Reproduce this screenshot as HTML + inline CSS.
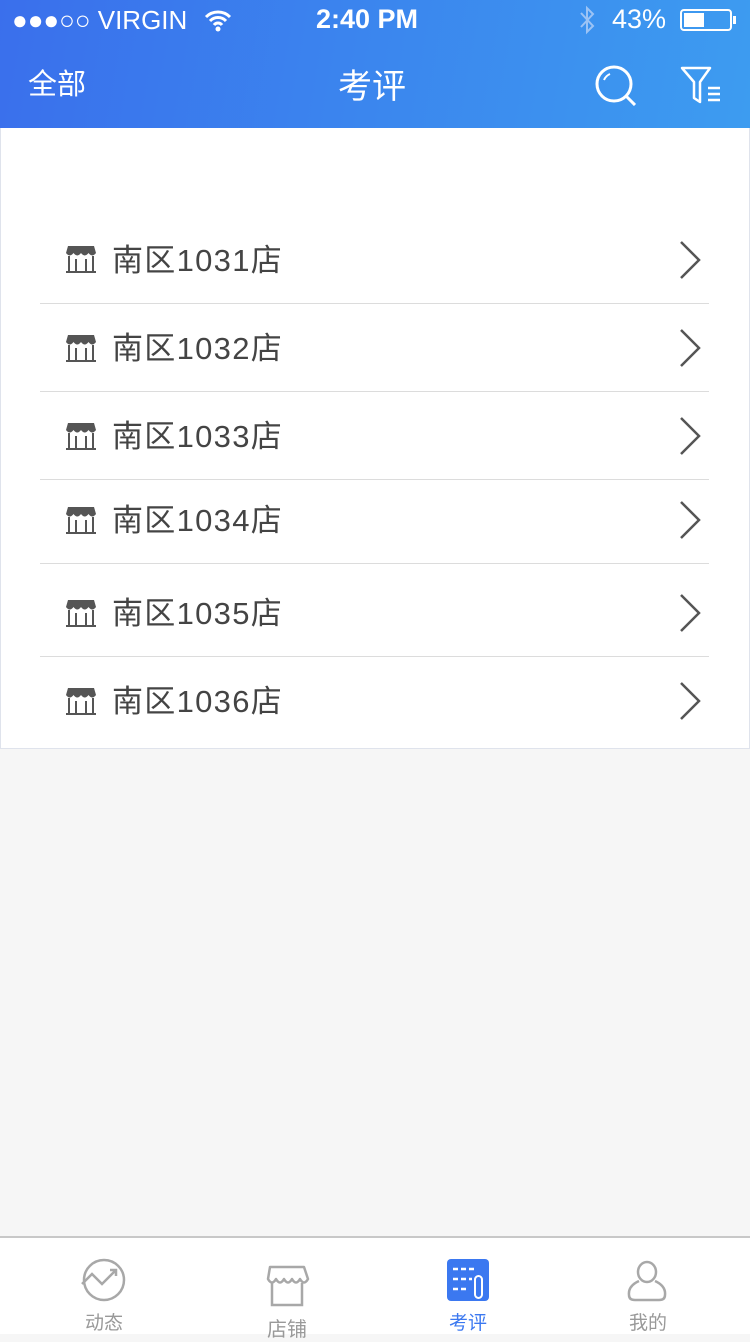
<!DOCTYPE html>
<html><head><meta charset="utf-8"><style>
*{margin:0;padding:0;box-sizing:border-box}
body{width:750px;height:1334px;background:#f6f6f6;font-family:"Liberation Sans","Noto Sans CJK SC",sans-serif;position:relative;overflow:hidden}
.hdr{position:absolute;left:0;top:0;width:750px;height:128px;background:linear-gradient(100deg,#3a6fec 0%,#3b86ee 50%,#3d9cf0 100%);color:#fff}
.sb{position:absolute;top:4px;font-size:28px}
.panel{position:absolute;left:0;top:128px;width:750px;height:621px;background:#fff;border:1px solid #dfe3ec;border-top:none}
.row{position:absolute;left:40px;width:669px;border-bottom:1px solid #dcdcdc}
.row .t{position:absolute;left:72px;font-size:31px;color:#444;letter-spacing:1.3px}
.row svg.s{position:absolute;left:25px}
.row svg.c{position:absolute;left:638px}
.tab{position:absolute;top:1236px;left:0;width:750px;height:98px;background:#fff;border-top:2px solid #c8c8c8}
.tl{position:absolute;font-size:19px;color:#999;text-align:center;width:100px}
</style></head><body>
<div class="hdr">
<div class="sb" style="left:12px;font-size:26px;top:5px">●●●○○ VIRGIN</div>
<svg style="position:absolute;left:203px;top:8px" width="30" height="24" viewBox="0 0 30 24"><path d="M3 9a17 17 0 0 1 24 0M7 13a11 11 0 0 1 16 0M11 17a5 5 0 0 1 8 0" stroke="#fff" stroke-width="3" fill="none"/><circle cx="15" cy="21" r="2.5" fill="#fff"/></svg>
<div class="sb" style="left:316px;font-weight:bold;font-size:27px">2:40 PM</div>
<svg style="position:absolute;left:577px;top:4px" width="20" height="32" viewBox="0 0 20 32"><path d="M4 9l12 13-6 6V4l6 6L4 23" stroke="#9cc3f5" stroke-width="2" fill="none"/></svg>
<div class="sb" style="left:612px;font-size:27px">43%</div>
<div style="position:absolute;left:680px;top:9px;width:52px;height:22px;border:2px solid #fff;border-radius:4px"><div style="margin:2px;width:20px;height:14px;background:#fff"></div></div>
<div style="position:absolute;left:733px;top:16px;width:3px;height:8px;background:#fff"></div>
<div style="position:absolute;left:28px;top:61px;font-size:29px">全部</div>
<div style="position:absolute;left:338px;top:59px;font-size:34px">考评</div>
<svg style="position:absolute;left:592px;top:64px" width="48" height="42" viewBox="0 0 48 42"><circle cx="22" cy="20" r="17" stroke="#fff" stroke-width="3" fill="none"/><path d="M34 32l9 9" stroke="#fff" stroke-width="3"/><path d="M12 16a11 11 0 0 1 6-6" stroke="#fff" stroke-width="2" fill="none"/></svg>
<svg style="position:absolute;left:680px;top:66px" width="44" height="38" viewBox="0 0 44 38"><path d="M2 2h28l-10 14v20l-6-4V16z" stroke="#fff" stroke-width="2.5" fill="none" stroke-linejoin="round"/><path d="M28 22h12M28 28h12M28 34h12" stroke="#fff" stroke-width="2.5"/></svg>
</div>
<div class="panel"></div>
<div class="row" style="top:215px;height:89px"><svg class="s" width="32" height="28" viewBox="0 0 32 28" style="top:30px"><path d="M3 1h26l2 7H1z" fill="#555"/><path d="M1 8q3.75 5 7.5 0q3.75 5 7.5 0q3.75 5 7.5 0q3.75 5 7.5 0" fill="#555"/><path d="M4 11v15M28 11v15M11 14v12M21 14v12M1 27h30" stroke="#555" stroke-width="2"/></svg><div class="t" style="top:20px">南区1031店</div><svg class="c" style="top:25px" width="24" height="40" viewBox="0 0 24 40"><path d="M3 2l18 18L3 38" stroke="#555" stroke-width="2.5" fill="none"/></svg></div>
<div class="row" style="top:304px;height:88px"><svg class="s" width="32" height="28" viewBox="0 0 32 28" style="top:30px"><path d="M3 1h26l2 7H1z" fill="#555"/><path d="M1 8q3.75 5 7.5 0q3.75 5 7.5 0q3.75 5 7.5 0q3.75 5 7.5 0" fill="#555"/><path d="M4 11v15M28 11v15M11 14v12M21 14v12M1 27h30" stroke="#555" stroke-width="2"/></svg><div class="t" style="top:19px">南区1032店</div><svg class="c" style="top:24px" width="24" height="40" viewBox="0 0 24 40"><path d="M3 2l18 18L3 38" stroke="#555" stroke-width="2.5" fill="none"/></svg></div>
<div class="row" style="top:392px;height:88px"><svg class="s" width="32" height="28" viewBox="0 0 32 28" style="top:30px"><path d="M3 1h26l2 7H1z" fill="#555"/><path d="M1 8q3.75 5 7.5 0q3.75 5 7.5 0q3.75 5 7.5 0q3.75 5 7.5 0" fill="#555"/><path d="M4 11v15M28 11v15M11 14v12M21 14v12M1 27h30" stroke="#555" stroke-width="2"/></svg><div class="t" style="top:19px">南区1033店</div><svg class="c" style="top:24px" width="24" height="40" viewBox="0 0 24 40"><path d="M3 2l18 18L3 38" stroke="#555" stroke-width="2.5" fill="none"/></svg></div>
<div class="row" style="top:480px;height:84px"><svg class="s" width="32" height="28" viewBox="0 0 32 28" style="top:26px"><path d="M3 1h26l2 7H1z" fill="#555"/><path d="M1 8q3.75 5 7.5 0q3.75 5 7.5 0q3.75 5 7.5 0q3.75 5 7.5 0" fill="#555"/><path d="M4 11v15M28 11v15M11 14v12M21 14v12M1 27h30" stroke="#555" stroke-width="2"/></svg><div class="t" style="top:15px">南区1034店</div><svg class="c" style="top:20px" width="24" height="40" viewBox="0 0 24 40"><path d="M3 2l18 18L3 38" stroke="#555" stroke-width="2.5" fill="none"/></svg></div>
<div class="row" style="top:564px;height:93px"><svg class="s" width="32" height="28" viewBox="0 0 32 28" style="top:35px"><path d="M3 1h26l2 7H1z" fill="#555"/><path d="M1 8q3.75 5 7.5 0q3.75 5 7.5 0q3.75 5 7.5 0q3.75 5 7.5 0" fill="#555"/><path d="M4 11v15M28 11v15M11 14v12M21 14v12M1 27h30" stroke="#555" stroke-width="2"/></svg><div class="t" style="top:24px">南区1035店</div><svg class="c" style="top:29px" width="24" height="40" viewBox="0 0 24 40"><path d="M3 2l18 18L3 38" stroke="#555" stroke-width="2.5" fill="none"/></svg></div>
<div class="row" style="top:657px;height:90px;border-bottom:none"><svg class="s" width="32" height="28" viewBox="0 0 32 28" style="top:30px"><path d="M3 1h26l2 7H1z" fill="#555"/><path d="M1 8q3.75 5 7.5 0q3.75 5 7.5 0q3.75 5 7.5 0q3.75 5 7.5 0" fill="#555"/><path d="M4 11v15M28 11v15M11 14v12M21 14v12M1 27h30" stroke="#555" stroke-width="2"/></svg><div class="t" style="top:19px">南区1036店</div><svg class="c" style="top:24px" width="24" height="40" viewBox="0 0 24 40"><path d="M3 2l18 18L3 38" stroke="#555" stroke-width="2.5" fill="none"/></svg></div>
<div class="tab">
<svg style="position:absolute;left:80px;top:20px" width="48" height="46" viewBox="0 0 48 46"><circle cx="24" cy="22" r="20" stroke="#a8a8a8" stroke-width="2.5" fill="none"/><path d="M2 26l10-10 10 10 14-14M30 12h6v6" stroke="#a8a8a8" stroke-width="2.5" fill="none"/></svg>
<div class="tl" style="left:54px;top:70px">动态</div>
<svg style="position:absolute;left:264px;top:27px" width="46" height="42" viewBox="0 0 46 42"><path d="M6 2h34l4 12q-4 7-8 0q-4 7-8 0q-4 7-8 0q-4 7-8 0q-4 7-8 0z" stroke="#a8a8a8" stroke-width="2.5" fill="none" stroke-linejoin="round"/><path d="M8 18v22h30V18" stroke="#a8a8a8" stroke-width="2.5" fill="none"/></svg>
<div class="tl" style="left:237px;top:75px;font-size:20px">店铺</div>
<svg style="position:absolute;left:447px;top:21px" width="42" height="42" viewBox="0 0 42 42"><rect width="42" height="42" rx="4" fill="#3b78f0"/><path d="M6 10h5M14 10h5M22 10h5M6 20h5M14 20h5M6 30h5M14 30h5M22 20h3" stroke="#fff" stroke-width="2.5"/><rect x="28" y="17" width="7" height="22" rx="3.5" stroke="#fff" stroke-width="2" fill="none"/></svg>
<div class="tl" style="left:418px;top:70px;color:#3b78f0">考评</div>
<svg style="position:absolute;left:627px;top:22px" width="40" height="42" viewBox="0 0 40 42"><ellipse cx="20" cy="12" rx="9" ry="10" stroke="#a8a8a8" stroke-width="2.5" fill="none"/><path d="M12 21q-11 5-10 14q0 5 6 5h24q6 0 6-5q1-9-10-14" stroke="#a8a8a8" stroke-width="2.5" fill="none"/></svg>
<div class="tl" style="left:598px;top:70px">我的</div>
</div>
</body></html>
